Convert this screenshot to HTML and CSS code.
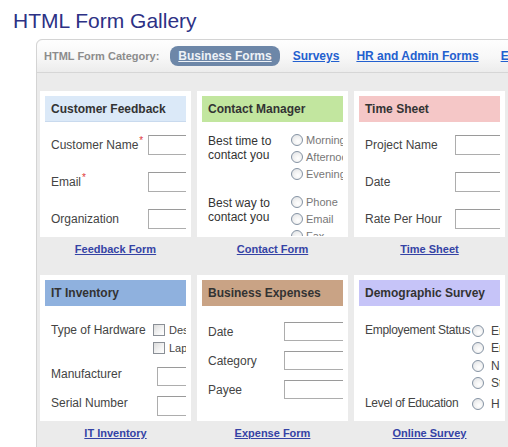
FILE: index.html
```html
<!DOCTYPE html>
<html>
<head>
<meta charset="utf-8">
<title>HTML Form Gallery</title>
<link rel="stylesheet" href="styles.css">
</head>
<body>
<h1 class="title">HTML Form Gallery</h1>
<div class="panel">
  <div class="nav">
    <span class="nav-label">HTML Form Category:</span>
    <a class="nav-link nav-link-active">Business Forms</a>
    <a class="nav-link">Surveys</a>
    <a class="nav-link nav-link-hr">HR and Admin Forms</a>
    <a class="nav-link nav-link-last">Event Forms</a>
  </div>
  <div class="gallery">
    <div class="item">
      <div class="card">
        <div class="card-head head-feedback">Customer Feedback</div>
        <div class="card-body">
          <div class="fields fields-feedback">
            <span class="lbl">Customer Name<sup class="req">*</sup></span><input class="txt" type="text">
            <span class="lbl">Email<sup class="req">*</sup></span><input class="txt" type="text">
            <span class="lbl">Organization</span><input class="txt" type="text">
          </div>
        </div>
      </div>
      <a class="card-link">Feedback Form</a>
    </div>
    <div class="item">
      <div class="card">
        <div class="card-head head-contact">Contact Manager</div>
        <div class="card-body">
          <div class="contact">
            <div class="contact-group">
              <span class="lbl lbl-wrap">Best time to<br>contact you</span>
              <div class="opts">
                <span class="opt"><span class="radio"></span>Morning</span>
                <span class="opt"><span class="radio"></span>Afternoon</span>
                <span class="opt"><span class="radio"></span>Evening</span>
              </div>
            </div>
            <div class="contact-group">
              <span class="lbl lbl-wrap">Best way to<br>contact you</span>
              <div class="opts">
                <span class="opt"><span class="radio"></span>Phone</span>
                <span class="opt"><span class="radio"></span>Email</span>
                <span class="opt"><span class="radio"></span>Fax</span>
              </div>
            </div>
          </div>
        </div>
      </div>
      <a class="card-link">Contact Form</a>
    </div>
    <div class="item">
      <div class="card">
        <div class="card-head head-time">Time Sheet</div>
        <div class="card-body">
          <div class="fields fields-time">
            <span class="lbl">Project Name</span><input class="txt" type="text">
            <span class="lbl">Date</span><input class="txt" type="text">
            <span class="lbl">Rate Per Hour</span><input class="txt" type="text">
          </div>
        </div>
      </div>
      <a class="card-link">Time Sheet</a>
    </div>
    <div class="item">
      <div class="card">
        <div class="card-head head-it">IT Inventory</div>
        <div class="card-body">
          <div class="fields fields-it">
            <span class="lbl lbl-check">Type of Hardware</span>
            <div class="checks">
              <span class="opt opt-check"><span class="check"></span>Desktop</span>
              <span class="opt opt-check"><span class="check"></span>Laptop</span>
            </div>
            <span class="lbl">Manufacturer</span><input class="txt txt-short txt-it" type="text">
            <span class="lbl">Serial Number</span><input class="txt txt-it" type="text">
          </div>
        </div>
      </div>
      <a class="card-link">IT Inventory</a>
    </div>
    <div class="item">
      <div class="card">
        <div class="card-head head-expense">Business Expenses</div>
        <div class="card-body">
          <div class="fields fields-expense">
            <span class="lbl">Date</span><input class="txt txt-short" type="text">
            <span class="lbl">Category</span><input class="txt txt-short" type="text">
            <span class="lbl">Payee</span><input class="txt txt-short" type="text">
          </div>
        </div>
      </div>
      <a class="card-link">Expense Form</a>
    </div>
    <div class="item">
      <div class="card">
        <div class="card-head head-survey">Demographic Survey</div>
        <div class="card-body">
          <div class="fields fields-survey">
            <span class="lbl lbl-survey">Employement Status</span>
            <div class="opts">
              <span class="opt opt-dark"><span class="radio"></span>Employed</span>
              <span class="opt opt-dark"><span class="radio"></span>Entrepreneur</span>
              <span class="opt opt-dark"><span class="radio"></span>Not employed</span>
              <span class="opt opt-dark"><span class="radio"></span>Student</span>
            </div>
            <span class="lbl lbl-survey">Level of Education</span>
            <div class="opts">
              <span class="opt opt-dark"><span class="radio"></span>High School</span>
            </div>
          </div>
        </div>
      </div>
      <a class="card-link">Online Survey</a>
    </div>
  </div>
</div>
</body>
</html>
```

FILE: styles.css
```css
* { box-sizing: border-box; }
html, body { margin: 0; padding: 0; background: #fff; overflow: hidden; }
body {
  width: 508px;
  height: 447px;
  font-family: "Liberation Sans", Arial, sans-serif;
}
.title {
  margin: 0;
  padding: 8px 0 0 13px;
  font-size: 21px;
  line-height: 26px;
  font-weight: normal;
  color: #2d3185;
}
.panel {
  margin: 5px 0 0 36px;
  width: 520px;
  border: 1px solid #d4d4d4;
  border-radius: 6px 6px 0 0;
  background: #ebebeb;
}
.nav {
  display: flex;
  align-items: center;
  height: 33px;
  padding-left: 7px;
  border-bottom: 1px solid #d6d6d6;
  border-radius: 6px 6px 0 0;
  background: linear-gradient(#fefefe, #f7f7f7 55%, #ececec);
  white-space: nowrap;
}
.nav-label {
  font-size: 11px;
  font-weight: bold;
  color: #8c8c8c;
}
.nav-link {
  margin-left: 13px;
  font-size: 12px;
  font-weight: bold;
  color: #2360cf;
  text-decoration: underline;
}
.nav-link-active {
  margin-left: 11px;
  padding: 0 8px;
  height: 20px;
  line-height: 20px;
  border-radius: 8px;
  background: #6d87a8;
  color: #eef2f7;
}
.nav-link-hr { margin-left: 17px; }
.nav-link-last { margin-left: 22px; }

.gallery {
  display: grid;
  grid-template-columns: repeat(3, 151px);
  column-gap: 6px;
  row-gap: 14px;
  padding: 18px 0 20px 3px;
}
.card {
  background: #fff;
  padding: 5px 5px 1px;
}
.card-head {
  height: 26px;
  line-height: 26px;
  padding-left: 6px;
  font-size: 12px;
  font-weight: bold;
  color: #333;
  white-space: nowrap;
}
.head-feedback { background: #dbe9f8; border-bottom: 1px solid #c9daee; }
.head-contact { background: #c2e69f; }
.head-time { background: #f5c7c7; }
.head-it { background: #8fb1de; }
.head-expense { background: #c9a385; }
.head-survey { background: #c6c4f8; }

.card-body {
  height: 114px;
  overflow: hidden;
  padding-left: 6px;
  font-size: 12px;
  color: #444;
}
.card-link {
  display: block;
  text-align: center;
  line-height: 24px;
  font-size: 11px;
  font-weight: bold;
  color: #3543a5;
  text-decoration: underline;
}

.fields {
  display: grid;
  align-items: center;
}
.lbl {
  line-height: 14px;
  white-space: nowrap;
}
.req {
  color: #e03a3a;
  font-size: 10px;
  line-height: 0;
  vertical-align: 5px;
  margin-left: 1px;
}
.txt {
  display: block;
  margin: 0;
  width: 100px;
  height: 20px;
  padding: 0;
  border: 1px solid #adadad;
  border-top-color: #9a9a9a;
  background: #fff;
}
.txt-short { height: 19px; }
.txt-it { margin-left: 4px; }

.fields-feedback { grid-template-columns: 97px auto; row-gap: 17px; padding-top: 13px; }
.fields-time { grid-template-columns: 90px auto; row-gap: 17px; padding-top: 13px; }
.fields-expense { grid-template-columns: 76px auto; row-gap: 10px; padding-top: 16px; }
.fields-it { grid-template-columns: 102px auto; row-gap: 10px; padding-top: 15px; align-items: start; }
.fields-survey { grid-template-columns: 107px auto; row-gap: 3px; padding-top: 16px; align-items: start; }

.lbl-check { padding-top: 2px; }
.lbl-survey { line-height: 17.5px; letter-spacing: -0.3px; }

.contact {
  display: flex;
  flex-direction: column;
  gap: 11px;
  padding-top: 9px;
}
.contact-group {
  display: grid;
  grid-template-columns: 83px auto;
  align-items: start;
}
.lbl-wrap { line-height: 14px; padding-top: 3px; color: #333; }

.opts, .checks {
  display: flex;
  flex-direction: column;
}
.opt {
  display: flex;
  align-items: center;
  height: 17px;
  gap: 3px;
  font-size: 11px;
  color: #777;
  white-space: nowrap;
}
.opt-dark {
  height: 17.5px;
  gap: 7px;
  font-size: 12px;
  color: #444;
}
.opt-check {
  height: 18px;
  gap: 4px;
  font-size: 11px;
  color: #444;
}
.radio {
  flex: none;
  width: 12px;
  height: 12px;
  border-radius: 50%;
  border: 1px solid #8593a3;
  background: radial-gradient(circle at 60% 65%, #fff 0, #f2f2f2 45%, #d9dde2 100%);
}
.check {
  flex: none;
  width: 12px;
  height: 12px;
  border: 1px solid #8a8f96;
  background: linear-gradient(135deg, #dcdcdc, #f4f4f4 60%, #fff);
}
```
